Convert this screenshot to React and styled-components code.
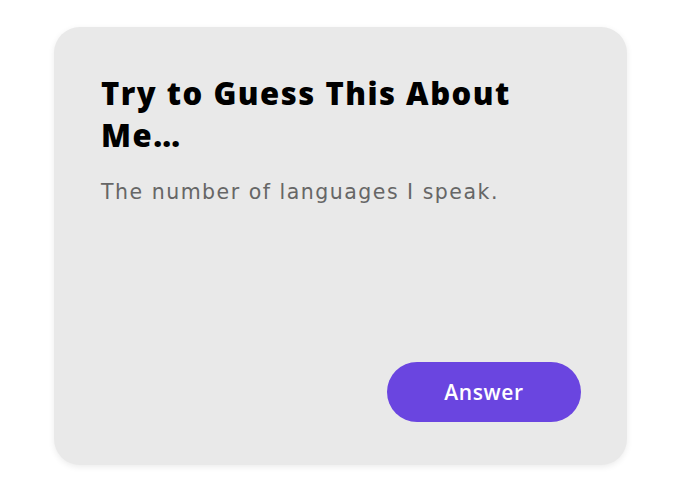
import React from "react";
import styled, { createGlobalStyle } from "styled-components";

const Global = createGlobalStyle`
  html, body { margin: 0; padding: 0; background: #ffffff; }
  body { font-family: "Open Sans", "DejaVu Sans", sans-serif; }
`;

const Page = styled.div`
  width: 680px;
  height: 492px;
  box-sizing: border-box;
  padding: 27px 53px 27px 54px;
`;

const Card = styled.div`
  box-sizing: border-box;
  width: 573px;
  height: 438px;
  background: #e9e9e9;
  border-radius: 26px;
  box-shadow: 0 2px 6px rgba(0, 0, 0, 0.08);
  padding: 45px 46px 43px 47px;
  display: flex;
  flex-direction: column;
`;

const Title = styled.h2`
  margin: 0;
  max-width: 440px;
  font-family: "Open Sans", "DejaVu Sans", sans-serif;
  font-weight: 800;
  font-size: 31px;
  line-height: 42px;
  color: #000000;
  letter-spacing: 1.5px;
`;

const Text = styled.p`
  margin: 21px 0 0;
  font-family: "DejaVu Sans", "Open Sans", sans-serif;
  font-weight: 400;
  font-size: 20.5px;
  line-height: 30px;
  color: #666666;
  letter-spacing: 1.5px;
`;

const Footer = styled.div`
  margin-top: auto;
  display: flex;
  justify-content: flex-end;
`;

const Button = styled.button`
  width: 194px;
  height: 60px;
  border: none;
  border-radius: 30px;
  background: #6a45e0;
  color: #ffffff;
  font-family: "Open Sans", "DejaVu Sans", sans-serif;
  font-weight: 600;
  font-size: 21px;
  letter-spacing: 0.6px;
  cursor: pointer;
`;

export default function App() {
  return (
    <>
      <Global />
      <Page>
        <Card>
          <Title>Try to Guess This About Me…</Title>
          <Text>The number of languages I speak.</Text>
          <Footer>
            <Button>Answer</Button>
          </Footer>
        </Card>
      </Page>
    </>
  );
}
